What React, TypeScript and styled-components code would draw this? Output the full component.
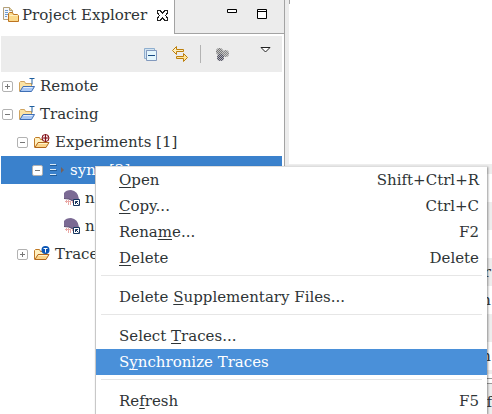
import React from "react";
import styled, { createGlobalStyle } from "styled-components";

const GlobalStyle = createGlobalStyle`
  * { box-sizing: border-box; }
  body {
    margin: 0;
    background: #fff;
    color: #2e3436;
    font: 15px/26px "DejaVu Serif", serif;
    overflow: hidden;
  }
  button { font: inherit; color: inherit; }
  ul { list-style: none; margin: 0; padding: 0; }
`;

const Workbench = styled.div`
  position: relative;
  display: flex;
  min-height: 100vh;
  overflow: hidden;
`;

const Explorer = styled.section`
  flex: 0 0 285px;
  padding-left: 1px;
  border-right: 1px solid #a3a3a3;
`;

const Sash = styled.div`
  flex: 0 0 4px;
  background: #ececec;
`;

const TabBar = styled.header`
  display: flex;
  height: 34px;
`;

const Tab = styled.div`
  display: flex;
  align-items: center;
  flex: 0 0 173px;
  padding: 0 0 4px 2px;
  white-space: nowrap;
`;

const TabTitle = styled.span`
  flex: 1;
  margin-left: 3px;
`;

const IconButton = styled.button`
  display: inline-flex;
  flex: none;
  padding: 0;
  border: 0;
  background: none;
`;

const CloseButton = styled(IconButton)`
  margin-right: 6px;
`;

const WindowButtons = styled.div`
  flex: 1;
  display: flex;
  align-items: flex-start;
  justify-content: flex-end;
  gap: 20px;
  padding: 9px 17px 0 0;
  background: #ececec;
  border-left: 1px solid #a3a3a3;
  border-bottom: 1px solid #a3a3a3;
`;

const Toolbar = styled.div`
  display: flex;
  align-items: center;
  justify-content: flex-end;
  height: 36px;
  margin: 2px 2px 0 0;
  padding-right: 11px;
  background: #ececec;
`;

const ToolGroup = styled.div<{ $gap: number; $end: number }>`
  display: flex;
  align-items: center;
  gap: ${(p) => p.$gap}px;
  margin-right: ${(p) => p.$end}px;
`;

const ToolDivider = styled.span`
  width: 1px;
  height: 18px;
  margin-right: 15px;
  background: #b3b3b3;
`;

const MenuArrow = styled(IconButton)`
  margin-bottom: 9px;
`;

const TreeRow = styled.li<{ $level: number; $selected?: boolean }>`
  display: flex;
  align-items: center;
  height: 28px;
  margin-right: 2px;
  padding-left: ${(p) => 1 + p.$level * 15}px;
  white-space: nowrap;
  background: ${(p) => (p.$selected ? "#3a81cc" : "transparent")};
  color: ${(p) => (p.$selected ? "#fff" : "inherit")};
`;

const Expander = styled.button<{ $leaf?: boolean }>`
  display: inline-flex;
  flex: none;
  width: 11px;
  height: 11px;
  margin-right: 6px;
  padding: 0;
  border: 1px solid #b2b2b2;
  border-radius: 2px;
  background: #fff;
  visibility: ${(p) => (p.$leaf ? "hidden" : "visible")};
`;

const TreeLabel = styled.span`
  margin-left: 5px;
`;

const Editor = styled.main`
  flex: 1;
  min-width: 0;
  display: flex;
  flex-direction: column;
`;

const EditorEdge = styled.div`
  height: 4px;
  border-left: 1px solid #a3a3a3;
`;

const EditorBody = styled.div`
  height: 160px;
`;

const Lines = styled.ul`
  border-bottom: 4px solid #ededed;
`;

const Line = styled.li<{ $shaded: boolean; $first?: boolean }>`
  height: ${(p) => (p.$first ? 10 : 28)}px;
  padding-right: 1px;
  line-height: 28px;
  text-align: right;
  background: ${(p) => (p.$shaded ? "#ededed" : "#fff")};
`;

const Divider = styled.div`
  height: 6px;
  margin-top: 4px;
  border-top: 1px solid #999;
  border-bottom: 1px solid #999;
`;

const StatusTabs = styled.div`
  flex: 1;
  padding-top: 5px;
  text-align: right;
  background: #ededed;
`;

const Menu = styled.div`
  position: absolute;
  top: 166px;
  left: 95px;
  right: 5px;
  background: #fff;
  border-top: 1px solid #ddd;
  border-left: 1px solid #c8c8c8;
  box-shadow: 1px 1px 2px rgba(0, 0, 0, 0.4);
`;

const MenuItem = styled.button<{ $active?: boolean }>`
  display: flex;
  justify-content: space-between;
  width: 100%;
  height: 26px;
  padding: 0 8px 0 23px;
  border: 0;
  line-height: 26px;
  white-space: nowrap;
  text-align: left;
  background: ${(p) => (p.$active ? "#4a90d9" : "transparent")};
  color: ${(p) => (p.$active ? "#fff" : "#2e3436")};
`;

const Mnemonic = styled.span`
  text-decoration: underline;
  text-decoration-thickness: 1px;
  text-underline-offset: 2px;
  text-decoration-skip-ink: none;
`;

const Separator = styled.hr`
  height: 1px;
  margin: 4px 5px 8px;
  border: 0;
  background: #e6e6e6;
`;

const ExplorerIcon = () => (
  <svg width="16" height="16" viewBox="0 0 16 16" aria-hidden="true">
    <path d="M.5.5h6l3 3v9h-9z" fill="#f4f7fb" stroke="#b5a078" />
    <path d="M6.5.5v3h3" fill="#e5d4a4" stroke="#b5a078" />
    <path d="M2 3.5h3M2 5.5h3M2 7.5h3M2 9.5h2" stroke="#6c9bd0" />
    <path d="M5.5 14.5v-8l1-1h3l1 2h4l1 1v6z" fill="#fbd98a" stroke="#bd7421" />
    <path d="M6.5 8.5h8" stroke="#fff0c2" />
  </svg>
);

const CloseIcon = () => (
  <svg width="11" height="11" viewBox="0 0 11 11" shapeRendering="crispEdges" aria-hidden="true">
    <path
      d="M.5.5h2.500l2.500 2.500 2.500-2.500h2.500v2.500l-2 2.500 2 2.500v2.500h-2.500l-2.500-2.500-2.500 2.500h-2.500v-2.500l2-2.500-2-2.500z"
      fill="#fff"
      stroke="#222"
    />
  </svg>
);

const MinimizeIcon = () => (
  <svg width="10" height="4" viewBox="0 0 10 4" aria-hidden="true">
    <path d="M.5.5h9v3h-9z" fill="#fff" stroke="#000" />
  </svg>
);

const MaximizeIcon = () => (
  <svg width="10" height="10" viewBox="0 0 10 10" aria-hidden="true">
    <path d="M.5.5h9v9h-9zM1 2.5h8" fill="#fff" stroke="#000" />
  </svg>
);

const CollapseIcon = () => (
  <svg width="13" height="13" viewBox="0 0 13 13" aria-hidden="true">
    <path d="M.5 10.5V.5h10v2h-8v8z" fill="#d3e4f2" stroke="#8fafcf" />
    <path d="M2.5 2.5h10v10h-10z" fill="#e4f6fc" stroke="#8299bd" />
    <path d="M4 7.5h7" stroke="#174a83" />
  </svg>
);

const LinkIcon = () => (
  <svg width="16" height="16" viewBox="0 0 16 16" aria-hidden="true">
    <path d="M.5 4.500l4-4v3h7v2h-7v3z" fill="#fff0bd" stroke="#bd7f0c" />
    <path d="M15.500 11.500l-4 4v-3h-7v-2h7v-3z" fill="#ffe69c" stroke="#bd7f0c" />
  </svg>
);

const FocusIcon = () => (
  <svg width="13" height="13" viewBox="0 0 13 13" aria-hidden="true">
    <defs>
      <pattern id="dither" width="2" height="2" patternUnits="userSpaceOnUse">
        <path d="M0 0h1v1H0zM1 1h1v1H1z" fill="#ececec" opacity="0.65" />
      </pattern>
    </defs>
    <circle cx="3.500" cy="3.500" r="3.500" fill="#777" />
    <circle cx="9.500" cy="5.500" r="3.500" fill="#888" />
    <circle cx="4.500" cy="9.500" r="3.500" fill="#4b4b5c" />
    <path d="M0 0h13v13H0z" fill="url(#dither)" />
  </svg>
);

const ArrowIcon = () => (
  <svg width="11" height="6" viewBox="0 0 11 6" aria-hidden="true">
    <path d="M1 .5h9l-4.500 4.500z" fill="#fff" stroke="#222" />
  </svg>
);

const ProjectIcon = () => (
  <svg width="16" height="16" viewBox="0 0 16 16" aria-hidden="true">
    <path d="M.5 13.500v-9l1-1h4l1 2h6v3" fill="#fbe3a4" stroke="#d0a460" />
    <path d="M1 13.500l3-5h11.500l-3 5z" fill="#a9c8f5" stroke="#3f6fb5" />
    <path d="M4.500 9.500h9" stroke="#e2efff" />
    <path d="M10.500.5h5M13 .5v6" stroke="#1f5f9f" fill="none" />
  </svg>
);

const FolderIcon = ({ kind }: { kind: "experiment" | "trace" }) => (
  <svg width="16" height="16" viewBox="0 0 16 16" aria-hidden="true">
    <path d="M.5 13.500v-9l1-1h4l1 2h6v3" fill="#fff0c0" stroke="#c07a26" />
    <path d="M1 13.500l3-5h11l-3 5z" fill="#fbd58a" stroke="#b2671b" />
    <path d="M4.500 9.500h9" stroke="#fff3cd" />
    {kind === "experiment" ? (
      <>
        <circle cx="11.500" cy="4" r="3.500" fill="#fff" stroke="#85131b" />
        <path d="M11.500 0v8M8 4h7" stroke="#85131b" />
        <path d="M9 1.500l5 5M14 1.500l-5 5" stroke="#85131b" strokeDasharray="1 1" />
      </>
    ) : (
      <>
        <circle cx="11.500" cy="4" r="4" fill="#0b56b5" />
        <path d="M9.500 2.500h4M11.500 2v4.500" stroke="#fff" />
      </>
    )}
  </svg>
);

const ExperimentIcon = () => (
  <svg width="16" height="16" viewBox="0 0 16 16" aria-hidden="true">
    <path d="M1 3.500h7M1 8.500h7M1 13.500h7" stroke="#235d99" />
    <path d="M1 2.500h6M1 7.500h6M1 12.500h6" stroke="#d8eaf8" />
    <path d="M12 5l3 3-3 3z" fill="#76615a" />
  </svg>
);

const TraceIcon = () => (
  <svg width="16" height="16" viewBox="0 0 16 16" aria-hidden="true">
    <path d="M0 8V3Q2 0 7 0Q14 1 15 9V11H9L5 9z" fill="#7b6a94" />
    <path d="M0 8.500l5 .5 4 2" fill="none" stroke="#59486d" />
    <path d="M2.500 10v3M4.500 10v5M6.500 11v4M8.500 11v2M1 11.500h6" stroke="#e9a9a6" />
    <path d="M9.500 9.500h6v6h-6z" fill="#fff" stroke="#17355e" />
    <path d="M11.500 14v-2.500h2.500M11.500 11.500l3 3" stroke="#17355e" fill="none" />
  </svg>
);

type Node = {
  label: string;
  level: number;
  state: "open" | "closed" | "leaf";
  icon: React.ReactNode;
  selected?: boolean;
};

const nodes: Node[] = [
  { label: "Remote", level: 0, state: "closed", icon: <ProjectIcon /> },
  { label: "Tracing", level: 0, state: "open", icon: <ProjectIcon /> },
  { label: "Experiments [1]", level: 1, state: "open", icon: <FolderIcon kind="experiment" /> },
  { label: "sync [2]", level: 2, state: "open", icon: <ExperimentIcon />, selected: true },
  { label: "n", level: 3, state: "leaf", icon: <TraceIcon /> },
  { label: "n", level: 3, state: "leaf", icon: <TraceIcon /> },
  { label: "Traces", level: 1, state: "closed", icon: <FolderIcon kind="trace" /> },
];

type Command = { before?: string; key: string; after: string; shortcut?: string; active?: boolean };

const groups: Command[][] = [
  [
    { key: "O", after: "pen", shortcut: "Shift+Ctrl+R" },
    { key: "C", after: "opy...", shortcut: "Ctrl+C" },
    { before: "Rena", key: "m", after: "e...", shortcut: "F2" },
    { key: "D", after: "elete", shortcut: "Delete" },
  ],
  [{ before: "Delete ", key: "S", after: "upplementary Files..." }],
  [
    { before: "Select ", key: "T", after: "races..." },
    { before: "S", key: "y", after: "nchronize Traces", active: true },
  ],
  [{ before: "Re", key: "f", after: "resh", shortcut: "F5" }],
];

const lines = ["", "", "", "", "r", "n", "", "n"];

export default function App() {
  return (
    <>
      <GlobalStyle />
      <Workbench>
        <Explorer>
          <TabBar>
            <Tab>
              <ExplorerIcon />
              <TabTitle>Project Explorer</TabTitle>
              <CloseButton aria-label="Close"><CloseIcon /></CloseButton>
            </Tab>
            <WindowButtons>
              <IconButton aria-label="Minimize"><MinimizeIcon /></IconButton>
              <IconButton aria-label="Maximize"><MaximizeIcon /></IconButton>
            </WindowButtons>
          </TabBar>
          <Toolbar>
            <ToolGroup $gap={15} $end={12}>
              <IconButton aria-label="Collapse All"><CollapseIcon /></IconButton>
              <IconButton aria-label="Link with Editor"><LinkIcon /></IconButton>
            </ToolGroup>
            <ToolDivider />
            <ToolGroup $gap={0} $end={31}>
              <IconButton aria-label="Focus"><FocusIcon /></IconButton>
            </ToolGroup>
            <MenuArrow aria-label="View Menu"><ArrowIcon /></MenuArrow>
          </Toolbar>
          <ul>
            {nodes.map((n, i) => (
              <TreeRow key={i} $level={n.level} $selected={n.selected}>
                <Expander $leaf={n.state === "leaf"} aria-label={`Toggle ${n.label}`}>
                  <svg width="9" height="9" viewBox="0 0 9 9" aria-hidden="true">
                    <path d={n.state === "closed" ? "M2 4.500h5M4.500 2v5" : "M2 4.500h5"} stroke="#777" />
                  </svg>
                </Expander>
                {n.icon}
                <TreeLabel>{n.label}</TreeLabel>
              </TreeRow>
            ))}
          </ul>
        </Explorer>
        <Sash />
        <Editor>
          <EditorEdge />
          <EditorBody />
          <Lines>
            {lines.map((text, i) => (
              <Line key={i} $first={i === 0} $shaded={i % 2 === 0}>{text}</Line>
            ))}
          </Lines>
          <Divider />
          <StatusTabs>ef</StatusTabs>
        </Editor>
        <Menu role="menu">
          {groups.map((group, g) => (
            <React.Fragment key={g}>
              {g > 0 && <Separator />}
              {group.map((c) => (
                <MenuItem key={c.after} role="menuitem" $active={c.active}>
                  <span>{c.before}<Mnemonic>{c.key}</Mnemonic>{c.after}</span>
                  {c.shortcut && <span>{c.shortcut}</span>}
                </MenuItem>
              ))}
            </React.Fragment>
          ))}
        </Menu>
      </Workbench>
    </>
  );
}
